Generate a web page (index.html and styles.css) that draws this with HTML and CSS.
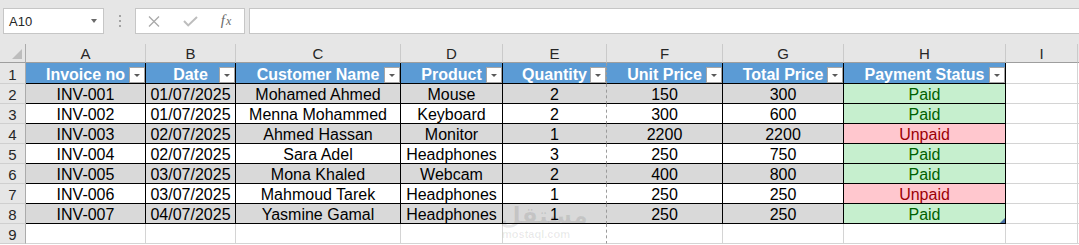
FILE: index.html
```html
<!DOCTYPE html>
<html lang="en">
<head>
    <meta charset="UTF-8">
    <title>Invoices</title>
    <link rel="stylesheet" href="styles.css">
</head>
<body>
    <div class="formula-bar">
        <div class="name-box"><span class="name-text">A10</span><span class="name-caret"></span></div>
        <div class="grip"><span></span><span></span><span></span></div>
        <div class="fx-buttons">
            <span class="fx-slot"><svg width="12" height="11" viewBox="0 0 12 11"><path d="M1 0.5L11 10.5M11 0.5L1 10.5" stroke="#a9a9a9" stroke-width="1.3" fill="none"/></svg></span>
            <span class="fx-slot"><svg width="15" height="11" viewBox="0 0 15 11"><path d="M1 5L5.2 9.4L14 1" stroke="#bdbdbd" stroke-width="2" fill="none"/></svg></span>
            <span class="fx-slot fx-label"><i>f</i><i class="fx-x">x</i></span>
        </div>
        <div class="formula-input"></div>
    </div>

    <table class="sheet">
        <colgroup>
            <col class="w-rh"><col class="w-a"><col class="w-b"><col class="w-c"><col class="w-d">
            <col class="w-e"><col class="w-f"><col class="w-g"><col class="w-h"><col class="w-i"><col class="w-j">
        </colgroup>
        <thead>
            <tr class="col-heads">
                <th class="corner"><span class="corner-tri"></span></th>
                <th>A</th><th>B</th><th>C</th><th>D</th><th>E</th><th>F</th><th>G</th><th>H</th><th>I</th><th></th>
            </tr>
        </thead>
        <tbody>
            <tr class="row-top">
                <td class="rh">1</td>
                <td class="hd">Invoice no<span class="filter"></span></td>
                <td class="hd">Date<span class="filter"></span></td>
                <td class="hd">Customer Name<span class="filter"></span></td>
                <td class="hd">Product<span class="filter"></span></td>
                <td class="hd brk">Quantity<span class="filter"></span></td>
                <td class="hd">Unit Price<span class="filter"></span></td>
                <td class="hd">Total Price<span class="filter"></span></td>
                <td class="hd">Payment Status<span class="filter"></span></td>
                <td class="free"></td><td class="free"></td>
            </tr>
            <tr class="band">
                <td class="rh">2</td>
                <td class="cell">INV-001</td><td class="cell">01/07/2025</td><td class="cell">Mohamed Ahmed</td>
                <td class="cell">Mouse</td><td class="cell brk">2</td><td class="cell">150</td><td class="cell">300</td>
                <td class="cell paid">Paid</td><td class="free"></td><td class="free"></td>
            </tr>
            <tr>
                <td class="rh">3</td>
                <td class="cell">INV-002</td><td class="cell">01/07/2025</td><td class="cell">Menna Mohammed</td>
                <td class="cell">Keyboard</td><td class="cell brk">2</td><td class="cell">300</td><td class="cell">600</td>
                <td class="cell paid">Paid</td><td class="free"></td><td class="free"></td>
            </tr>
            <tr class="band">
                <td class="rh">4</td>
                <td class="cell">INV-003</td><td class="cell">02/07/2025</td><td class="cell">Ahmed Hassan</td>
                <td class="cell">Monitor</td><td class="cell brk">1</td><td class="cell">2200</td><td class="cell">2200</td>
                <td class="cell unpaid">Unpaid</td><td class="free"></td><td class="free"></td>
            </tr>
            <tr>
                <td class="rh">5</td>
                <td class="cell">INV-004</td><td class="cell">02/07/2025</td><td class="cell">Sara Adel</td>
                <td class="cell">Headphones</td><td class="cell brk">3</td><td class="cell">250</td><td class="cell">750</td>
                <td class="cell paid">Paid</td><td class="free"></td><td class="free"></td>
            </tr>
            <tr class="band">
                <td class="rh">6</td>
                <td class="cell">INV-005</td><td class="cell">03/07/2025</td><td class="cell">Mona Khaled</td>
                <td class="cell">Webcam</td><td class="cell brk">2</td><td class="cell">400</td><td class="cell">800</td>
                <td class="cell paid">Paid</td><td class="free"></td><td class="free"></td>
            </tr>
            <tr>
                <td class="rh">7</td>
                <td class="cell">INV-006</td><td class="cell">03/07/2025</td><td class="cell">Mahmoud Tarek</td>
                <td class="cell">Headphones</td><td class="cell brk">1</td><td class="cell">250</td><td class="cell">250</td>
                <td class="cell unpaid">Unpaid</td><td class="free"></td><td class="free"></td>
            </tr>
            <tr class="band">
                <td class="rh">8</td>
                <td class="cell">INV-007</td><td class="cell">04/07/2025</td><td class="cell">Yasmine Gamal</td>
                <td class="cell">Headphones</td><td class="cell brk">1</td><td class="cell">250</td><td class="cell">250</td>
                <td class="cell paid">Paid<span class="resize-grip"></span></td><td class="free"></td><td class="free"></td>
            </tr>
            <tr>
                <td class="rh">9</td>
                <td class="free"></td><td class="free"></td><td class="free"></td><td class="free"></td>
                <td class="free brk"></td><td class="free"></td><td class="free"></td><td class="free"></td>
                <td class="free"></td><td class="free"></td>
            </tr>
        </tbody>
    </table>

    <div class="watermark">
        <div class="wm-ar">مستقل</div>
        <div class="wm-en">mostaql.com</div>
    </div>
</body>
</html>
```

FILE: styles.css
```css
* {
    box-sizing: border-box;
}

html,
body {
    margin: 0;
    overflow: hidden;
}

body {
    position: relative;
    width: 1079px;
    height: 245px;
    background: #fff;
    font-family: "Liberation Sans", Arial, sans-serif;
    color: #000;
}

/* formula bar */
.formula-bar {
    display: flex;
    align-items: flex-start;
    height: 44px;
    padding: 8px 0 0 3px;
    background: #e6e6e6;
}

.name-box {
    display: flex;
    align-items: center;
    justify-content: space-between;
    width: 101px;
    height: 26px;
    padding: 0 6px 0 5px;
    background: #fff;
    border: 1px solid #c6c6c6;
    font-size: 13px;
    color: #262626;
}

.name-caret {
    width: 0;
    height: 0;
    border-left: 3.5px solid transparent;
    border-right: 3.5px solid transparent;
    border-top: 4px solid #6a6a6a;
}

.grip {
    display: flex;
    flex-direction: column;
    align-items: center;
    gap: 3px;
    width: 31px;
    padding-top: 7px;
}

.grip span {
    width: 2px;
    height: 2px;
    background: #a3a3a3;
}

.fx-buttons {
    display: flex;
    width: 110px;
    height: 26px;
    background: #fff;
    border: 1px solid #c6c6c6;
}

.fx-slot {
    display: flex;
    align-items: center;
    justify-content: center;
    width: 36px;
    height: 100%;
}

.fx-label {
    font-family: "Liberation Serif", "Times New Roman", serif;
    font-size: 15px;
    color: #6b6b6b;
    padding-bottom: 2px;
}

.fx-label .fx-x {
    font-size: 12px;
    margin-left: 1px;
    position: relative;
    top: 1px;
}

.formula-input {
    flex: 1;
    height: 26px;
    margin-left: 4px;
    background: #fff;
    border: 1px solid #c6c6c6;
    border-right: none;
}

/* sheet grid */
.sheet {
    border-collapse: separate;
    border-spacing: 0;
    table-layout: fixed;
    width: 1118px;
}

.w-rh { width: 26px; }
.w-a { width: 120px; }
.w-b { width: 90px; }
.w-c { width: 165px; }
.w-d { width: 102px; }
.w-e { width: 104px; }
.w-f { width: 116px; }
.w-g { width: 121px; }
.w-h { width: 162px; }
.w-i { width: 72px; }
.w-j { width: 40px; }

.sheet th,
.sheet td {
    padding: 3px 0 0;
    line-height: 16px;
    font-size: 16px;
    text-align: center;
    white-space: nowrap;
    vertical-align: top;
}

.col-heads th {
    height: 19px;
    padding-top: 2px;
    font-size: 15px;
    font-weight: normal;
    color: #262626;
    background: #e6e6e6;
    border-right: 1px solid #cacaca;
    border-bottom: 1px solid #9e9e9e;
}

.col-heads .corner {
    position: relative;
    border-right-color: #ababab;
}

.corner-tri {
    position: absolute;
    right: 3px;
    bottom: 3px;
    width: 0;
    height: 0;
    border-left: 10px solid transparent;
    border-bottom: 10px solid #bdbdbd;
}

.sheet tbody tr {
    height: 20px;
}

.sheet tbody tr.row-top {
    height: 21px;
}

.sheet td {
    height: 20px;
}

.sheet .row-top td {
    height: 21px;
    padding-top: 4px;
}

.sheet td.rh {
    font-size: 15px;
    color: #262626;
    background: #e6e6e6;
    border-right: 1px solid #ababab;
    border-bottom: 1px solid #cfcfcf;
}

.sheet td.free {
    border-right: 1px solid #d4d4d4;
    border-bottom: 1px solid #d4d4d4;
}

.sheet td.cell,
.sheet td.hd {
    position: relative;
    border-right: 1px solid #000;
    border-bottom: 1px solid #000;
}

.sheet td.hd {
    font-weight: 700;
    color: #fff;
    background: #5b9bd5;
}

.sheet .band td.cell {
    background: #d9d9d9;
}

.sheet td.brk,
.sheet td.free.brk {
    border-right: 1px dashed #9a9a9a;
}

.sheet td.cell.paid {
    background: #c6efce;
    color: #006100;
}

.sheet td.cell.unpaid {
    background: #ffc7ce;
    color: #9c0006;
}

.filter {
    position: absolute;
    right: 0;
    bottom: 0;
    width: 16px;
    height: 16px;
    background: #fff;
    border: 1px solid #a6a6a6;
}

.filter::after {
    content: "";
    position: absolute;
    left: 4px;
    top: 6px;
    border-left: 3px solid transparent;
    border-right: 3px solid transparent;
    border-top: 3px solid #5a5a5a;
}

.resize-grip {
    position: absolute;
    right: 0;
    bottom: 0;
    width: 0;
    height: 0;
    border-left: 5px solid transparent;
    border-bottom: 5px solid #4a6fa5;
}

/* site watermark */
.watermark {
    position: absolute;
    left: 500px;
    top: 204px;
    width: 72px;
    text-align: center;
    color: rgba(0, 0, 0, 0.09);
    font-weight: 700;
    pointer-events: none;
}

.wm-ar {
    font-family: "DejaVu Sans", sans-serif;
    font-size: 24px;
    line-height: 24px;
}

.wm-en {
    font-size: 11px;
    line-height: 12px;
}
```
